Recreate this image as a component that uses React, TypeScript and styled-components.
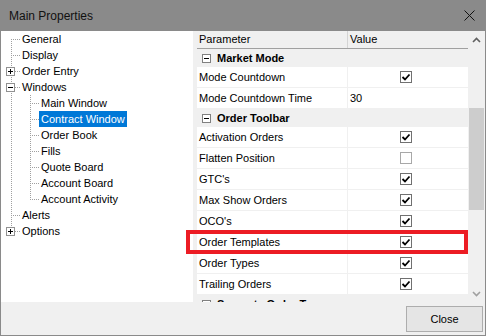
import React from 'react'
import styled, { createGlobalStyle } from 'styled-components'

const GlobalStyle = createGlobalStyle`
    html, body {
        margin: 0;
        padding: 0;
        background: #fff;
    }
    body {
        font-family: "Liberation Sans", Arial, sans-serif;
        font-size: 11px;
        color: #000;
    }
`

const dotsV = 'repeating-linear-gradient(to bottom, #a0a0a0 0 1px, transparent 1px 2px)'
const dotsH = 'repeating-linear-gradient(to right, #a0a0a0 0 1px, transparent 1px 2px)'

const Window = styled.div`
    position: relative;
    width: 486px;
    height: 336px;
    box-sizing: border-box;
    border: 1px solid #8a8a8a;
    border-top: none;
    display: flex;
    flex-direction: column;
    background: #f0f0f0;
    overflow: hidden;
`

const TitleBar = styled.div`
    height: 31px;
    flex: none;
    background: #8a8a8a;
    display: flex;
    align-items: center;
    justify-content: space-between;
    padding: 0 10px 0 8px;
    font-size: 12px;
    color: #111;
`

const Body = styled.div`
    position: relative;
    height: 271px;
    flex: none;
    display: flex;
`

const TreePanel = styled.div`
    width: 192px;
    flex: none;
    background: #fff;
    overflow: hidden;
`

const TreeRow = styled.div`
    display: flex;
    height: 16px;
`

const Guide = styled.div<{ $line?: boolean }>`
    position: relative;
    width: 19px;
    flex: none;
    &::before {
        content: '';
        position: absolute;
        left: 10px;
        top: 0;
        bottom: 0;
        width: 1px;
        background: ${p => (p.$line ? dotsV : 'none')};
    }
`

const Connector = styled.div<{ $first?: boolean; $last?: boolean }>`
    position: relative;
    width: 19px;
    flex: none;
    &::before {
        content: '';
        position: absolute;
        left: 10px;
        width: 1px;
        top: ${p => (p.$first ? '8px' : '0')};
        bottom: ${p => (p.$last ? '8px' : '0')};
        background: ${dotsV};
    }
    &::after {
        content: '';
        position: absolute;
        left: 10px;
        top: 8px;
        width: 9px;
        height: 1px;
        background: ${dotsH};
    }
`

const ExpandBox = styled.svg`
    position: absolute;
    left: 5px;
    top: 4px;
    z-index: 1;
`

const TreeLabel = styled.span<{ $selected?: boolean }>`
    padding: 0 2px;
    line-height: 16px;
    white-space: nowrap;
    background: ${p => (p.$selected ? '#0078d7' : 'transparent')};
    color: ${p => (p.$selected ? '#fff' : '#000')};
`

const RightPanel = styled.div`
    flex: 1;
    display: flex;
    padding-left: 4px;
    background: #f0f0f0;
`

const Grid = styled.div`
    width: 271px;
    flex: none;
    display: flex;
    flex-direction: column;
    background: #fff;
    overflow: hidden;
`

const HeaderRow = styled.div`
    height: 18px;
    flex: none;
    box-sizing: border-box;
    display: flex;
    background: #f0f0f0;
    border-bottom: 1px solid #a0a0a0;
`

const HeaderCell = styled.div<{ $width?: number }>`
    box-sizing: border-box;
    width: ${p => (p.$width ? `${p.$width}px` : 'auto')};
    flex: ${p => (p.$width ? 'none' : '1')};
    padding-left: 2px;
    line-height: 17px;
    border-right: ${p => (p.$width ? '1px solid #d4d4d4' : 'none')};
`

const CategoryRow = styled.div`
    height: 18px;
    flex: none;
    display: flex;
    align-items: center;
    padding-left: 5px;
    background: #f0f0f0;
    font-weight: bold;
    white-space: nowrap;
`

const CategoryBox = styled.svg`
    margin-right: 6px;
    flex: none;
`

const ItemRow = styled.div`
    height: 21px;
    flex: none;
    box-sizing: border-box;
    display: flex;
    border-bottom: 1px solid #f0f0f0;
`

const NameCell = styled.div`
    width: 151px;
    flex: none;
    box-sizing: border-box;
    padding-left: 2px;
    line-height: 20px;
    border-right: 1px solid #f0f0f0;
    white-space: nowrap;
`

const ValueCell = styled.div<{ $center?: boolean }>`
    flex: 1;
    display: flex;
    align-items: center;
    justify-content: ${p => (p.$center ? 'center' : 'flex-start')};
    padding: ${p => (p.$center ? '0 4px 0 0' : '0 0 0 2px')};
`

const CheckBox = styled.div<{ $checked?: boolean }>`
    width: 12px;
    height: 12px;
    box-sizing: border-box;
    border: 1px solid ${p => (p.$checked ? '#707070' : '#a8a8a8')};
    background: #fff;
    display: flex;
    align-items: center;
    justify-content: center;
`

const ScrollBar = styled.div`
    width: 17px;
    flex: none;
    display: flex;
    flex-direction: column;
    background: #f0f0f0;
`

const ScrollArrow = styled.div`
    height: 17px;
    flex: none;
    display: flex;
    align-items: center;
    justify-content: center;
`

const Track = styled.div`
    flex: 1;
    display: flex;
    flex-direction: column;
    align-items: center;
`

const Thumb = styled.div`
    margin-top: 60px;
    width: 15px;
    height: 102px;
    background: #cdcdcd;
`

const Footer = styled.div`
    flex: 1;
    display: flex;
    justify-content: flex-end;
    align-items: flex-start;
    padding: 4px 2px 0 0;
`

const Button = styled.button`
    width: 77px;
    height: 26px;
    box-sizing: border-box;
    border: 1px solid #adadad;
    background: #e5e5e5;
    font-family: "Liberation Sans", Arial, sans-serif;
    font-size: 11px;
    color: #000;
    padding: 0;
`

const Highlight = styled.div`
    position: absolute;
    left: 185px;
    top: 199px;
    width: 282px;
    height: 24px;
    box-sizing: border-box;
    border: 4px solid #ec1c24;
    pointer-events: none;
`

const PlusMinus = ({ plus }: { plus: boolean }) => (
    <>
        <rect x="0.5" y="0.5" width="8" height="8" fill="#fff" stroke="#919191" />
        <line x1="2" y1="4.5" x2="7" y2="4.5" stroke="#000" />
        {plus && <line x1="4.5" y1="2" x2="4.5" y2="7" stroke="#000" />}
    </>
)

type TreeItem = {
    label: string
    level: number
    expander?: 'plus' | 'minus'
    selected?: boolean
    first?: boolean
    last?: boolean
}

const tree: TreeItem[] = [
    { label: 'General', level: 0, first: true },
    { label: 'Display', level: 0 },
    { label: 'Order Entry', level: 0, expander: 'plus' },
    { label: 'Windows', level: 0, expander: 'minus' },
    { label: 'Main Window', level: 1 },
    { label: 'Contract Window', level: 1, selected: true },
    { label: 'Order Book', level: 1 },
    { label: 'Fills', level: 1 },
    { label: 'Quote Board', level: 1 },
    { label: 'Account Board', level: 1 },
    { label: 'Account Activity', level: 1, last: true },
    { label: 'Alerts', level: 0 },
    { label: 'Options', level: 0, expander: 'plus', last: true },
]

type GridItem =
    | { kind: 'cat'; label: string }
    | { kind: 'item'; label: string; check?: boolean; value?: string }

const grid: GridItem[] = [
    { kind: 'cat', label: 'Market Mode' },
    { kind: 'item', label: 'Mode Countdown', check: true },
    { kind: 'item', label: 'Mode Countdown Time', value: '30' },
    { kind: 'cat', label: 'Order Toolbar' },
    { kind: 'item', label: 'Activation Orders', check: true },
    { kind: 'item', label: 'Flatten Position', check: false },
    { kind: 'item', label: "GTC's", check: true },
    { kind: 'item', label: 'Max Show Orders', check: true },
    { kind: 'item', label: "OCO's", check: true },
    { kind: 'item', label: 'Order Templates', check: true },
    { kind: 'item', label: 'Order Types', check: true },
    { kind: 'item', label: 'Trailing Orders', check: true },
    { kind: 'cat', label: 'Separate Order Type' },
]

const Tree = () => (
    <TreePanel>
        {tree.map(item => (
            <TreeRow key={item.label}>
                {item.level === 1 && <Guide $line />}
                <Connector $first={item.first} $last={item.last}>
                    {item.expander && (
                        <ExpandBox width="9" height="9" viewBox="0 0 9 9">
                            <PlusMinus plus={item.expander === 'plus'} />
                        </ExpandBox>
                    )}
                </Connector>
                <TreeLabel $selected={item.selected}>{item.label}</TreeLabel>
            </TreeRow>
        ))}
    </TreePanel>
)

const PropertyGrid = () => (
    <Grid>
        <HeaderRow>
            <HeaderCell $width={151}>Parameter</HeaderCell>
            <HeaderCell>Value</HeaderCell>
        </HeaderRow>
        {grid.map(row =>
            row.kind === 'cat' ? (
                <CategoryRow key={row.label}>
                    <CategoryBox width="9" height="9" viewBox="0 0 9 9">
                        <rect x="0.5" y="0.5" width="8" height="8" fill="#fff" stroke="#808080" />
                        <line x1="2" y1="4.5" x2="7" y2="4.5" stroke="#000" />
                    </CategoryBox>
                    {row.label}
                </CategoryRow>
            ) : (
                <ItemRow key={row.label}>
                    <NameCell>{row.label}</NameCell>
                    {row.value !== undefined ? (
                        <ValueCell>{row.value}</ValueCell>
                    ) : (
                        <ValueCell $center>
                            <CheckBox $checked={row.check}>
                                {row.check && (
                                    <svg width="10" height="10" viewBox="0 0 10 10">
                                        <path d="M1.5 5 L4 7.5 L8.5 2.5" fill="none" stroke="#000" strokeWidth="1.8" />
                                    </svg>
                                )}
                            </CheckBox>
                        </ValueCell>
                    )}
                </ItemRow>
            )
        )}
    </Grid>
)

const App = () => {
    return <>
        <GlobalStyle />
        <Window>
            <TitleBar>
                <span>Main Properties</span>
                <svg width="11" height="11" viewBox="0 0 11 11">
                    <path d="M0.5 0.5 L10.5 10.5 M10.5 0.5 L0.5 10.5" stroke="#111" strokeWidth="1" />
                </svg>
            </TitleBar>
            <Body>
                <Tree />
                <RightPanel>
                    <PropertyGrid />
                    <ScrollBar>
                        <ScrollArrow>
                            <svg width="9" height="6" viewBox="0 0 9 6">
                                <path d="M1 5 L4.5 1.5 L8 5" fill="none" stroke="#606060" strokeWidth="1.6" />
                            </svg>
                        </ScrollArrow>
                        <Track>
                            <Thumb />
                        </Track>
                        <ScrollArrow>
                            <svg width="9" height="6" viewBox="0 0 9 6">
                                <path d="M1 1 L4.5 4.5 L8 1" fill="none" stroke="#a0a0a0" strokeWidth="1.6" />
                            </svg>
                        </ScrollArrow>
                    </ScrollBar>
                </RightPanel>
                <Highlight />
            </Body>
            <Footer>
                <Button>Close</Button>
            </Footer>
        </Window>
    </>
}

export default App
